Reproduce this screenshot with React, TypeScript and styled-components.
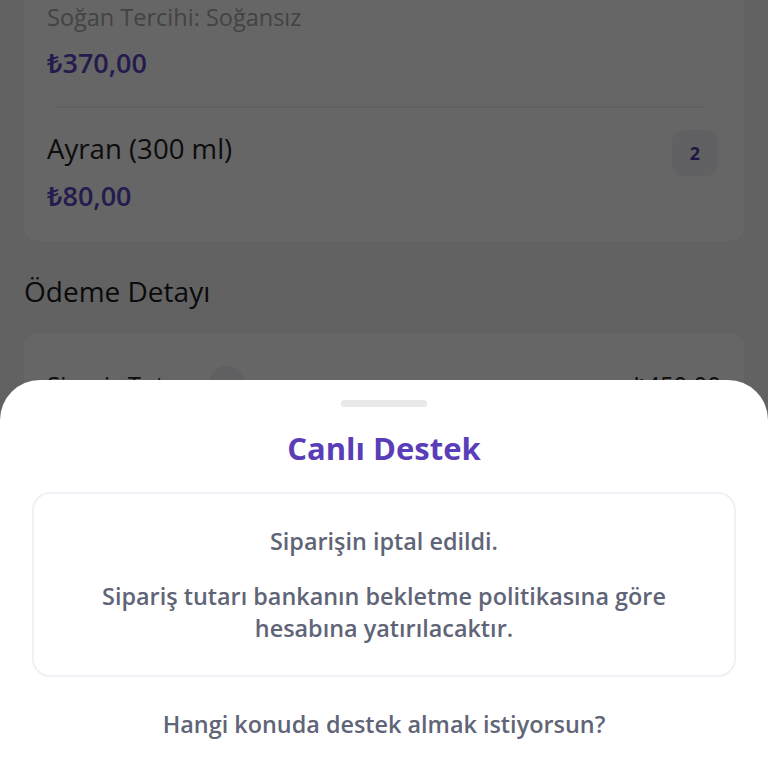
import React from "react";
import styled, { createGlobalStyle } from "styled-components";

const Global = createGlobalStyle`
  html, body { margin: 0; padding: 0; }
  body {
    background: #f5f5f5;
    font-family: "Open Sans", "Noto Sans", sans-serif;
    width: 768px;
    height: 768px;
    overflow: hidden;
  }
`;

const Page = styled.div`
  display: flex;
  flex-direction: column;
  padding: 0 24px;
  margin-top: -14px;
`;

const Card = styled.div`
  background: #ffffff;
  border-radius: 14px;
  display: flex;
  flex-direction: column;
  padding: 0 23px;
`;

const Item = styled.div`
  display: flex;
  align-items: flex-start;
  justify-content: space-between;
  padding: ${(p) => p.$pad};
`;

const ItemInfo = styled.div`
  display: flex;
  flex-direction: column;
`;

const ItemName = styled.div`
  font-size: 27.6px;
  color: #222;
  line-height: 36px;
`;

const ItemNote = styled.div`
  font-size: 23.5px;
  color: #a8a8a8;
  line-height: 34px;
`;

const Price = styled.div`
  font-size: 27px;
  font-weight: 600;
  color: #5a47c2;
  line-height: 36px;
  margin-top: ${(p) => p.$gap || "11px"};
`;

const Divider = styled.div`
  height: 2px;
  background: #f0f0f0;
  margin: 0 16px 0 8px;
`;

const Qty = styled.div`
  width: 46px;
  height: 46px;
  border-radius: 11px;
  background: #f2f1f7;
  color: #4d3ba8;
  font-weight: 700;
  font-size: 18px;
  display: flex;
  align-items: center;
  justify-content: center;
  margin-top: 0;
  margin-right: 3px;
`;

const SectionTitle = styled.div`
  font-size: 28px;
  font-weight: 500;
  color: #1a1a1a;
  margin: 32px 0 24px;
  line-height: 36px;
`;

const PayRow = styled.div`
  display: flex;
  align-items: center;
  justify-content: space-between;
  padding: 33px 0 40px;
  font-size: 24px;
  color: #222;
`;

const PayLabel = styled.div`
  display: flex;
  align-items: center;
  gap: 16px;
`;

const Chevron = styled.div`
  width: 36px;
  height: 36px;
  border-radius: 50%;
  background: #efeef6;
  display: flex;
  align-items: center;
  justify-content: center;
  color: #4d3ba8;
`;

const Overlay = styled.div`
  position: fixed;
  inset: 0;
  background: rgba(0, 0, 0, 0.6);
`;

const Sheet = styled.div`
  position: fixed;
  left: 0;
  right: 0;
  top: 380px;
  bottom: 0;
  background: #ffffff;
  border-radius: 40px 40px 0 0;
  display: flex;
  flex-direction: column;
  align-items: center;
  padding: 20px 32px 0;
`;

const Handle = styled.div`
  width: 86px;
  height: 7px;
  border-radius: 4px;
  background: #e8e8e8;
`;

const Title = styled.div`
  margin-top: 21px;
  font-size: 31px;
  font-weight: 700;
  color: #5a3eb8;
  line-height: 40px;
`;

const InfoBox = styled.div`
  margin-top: 24px;
  align-self: stretch;
  border: 2px solid #f0f1f6;
  border-radius: 18px;
  padding: 31px 20px 31px;
  display: flex;
  flex-direction: column;
  align-items: center;
  gap: 23px;
  text-align: center;
`;

const InfoText = styled.div`
  font-size: 23.4px;
  line-height: 32px;
  color: #5f6577;
  font-weight: 600;
`;

const Question = styled.div`
  margin-top: 31px;
  font-size: 23.4px;
  line-height: 32px;
  color: #5f6577;
  font-weight: 600;
`;

export default function App() {
  return (
    <>
      <Global />
      <Page>
        <Card>
          <Item $pad="14px 0 25px">
            <ItemInfo>
              <ItemNote>Soğan Tercihi: Soğansız</ItemNote>
              <Price>₺370,00</Price>
            </ItemInfo>
          </Item>
          <Divider />
          <Item $pad="22px 0 27px">
            <ItemInfo>
              <ItemName>Ayran (300 ml)</ItemName>
              <Price $gap="12px">₺80,00</Price>
            </ItemInfo>
            <Qty>2</Qty>
          </Item>
        </Card>
        <SectionTitle>Ödeme Detayı</SectionTitle>
        <Card>
          <PayRow>
            <PayLabel>
              Sipariş Tutarı
              <Chevron>
                <svg width="16" height="16" viewBox="0 0 24 24" fill="none" stroke="currentColor" strokeWidth="3" strokeLinecap="round" strokeLinejoin="round">
                  <path d="M6 9l6 6 6-6" />
                </svg>
              </Chevron>
            </PayLabel>
            <div>₺450,00</div>
          </PayRow>
        </Card>
      </Page>
      <Overlay />
      <Sheet>
        <Handle />
        <Title>Canlı Destek</Title>
        <InfoBox>
          <InfoText>Siparişin iptal edildi.</InfoText>
          <InfoText>
            Sipariş tutarı bankanın bekletme politikasına göre
            <br />
            hesabına yatırılacaktır.
          </InfoText>
        </InfoBox>
        <Question>Hangi konuda destek almak istiyorsun?</Question>
      </Sheet>
    </>
  );
}
